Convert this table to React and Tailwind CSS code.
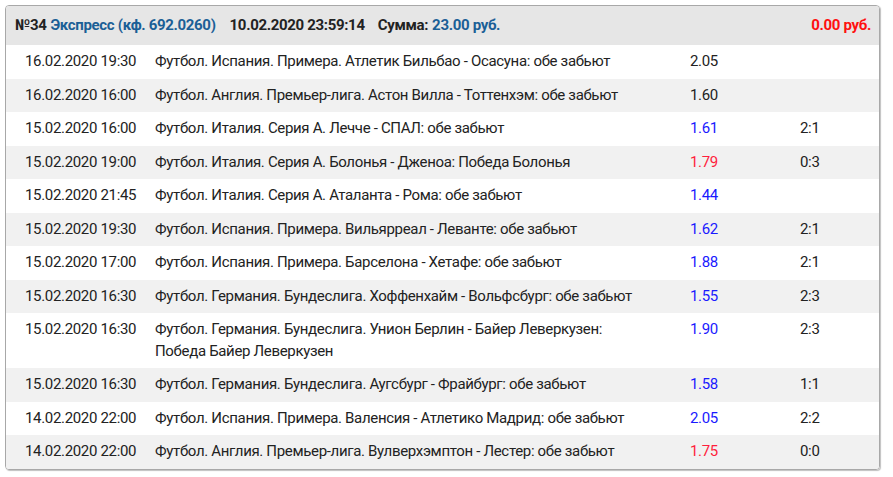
import React from "react";

const rows = [
  ["16.02.2020 19:30", "Футбол. Испания. Примера. Атлетик Бильбао - Осасуна: обе забьют", "2.05", "", "dark"],
  ["16.02.2020 16:00", "Футбол. Англия. Премьер-лига. Астон Вилла - Тоттенхэм: обе забьют", "1.60", "", "dark"],
  ["15.02.2020 16:00", "Футбол. Италия. Серия А. Лечче - СПАЛ: обе забьют", "1.61", "2:1", "blue"],
  ["15.02.2020 19:00", "Футбол. Италия. Серия А. Болонья - Дженоа: Победа Болонья", "1.79", "0:3", "red"],
  ["15.02.2020 21:45", "Футбол. Италия. Серия А. Аталанта - Рома: обе забьют", "1.44", "", "blue"],
  ["15.02.2020 19:30", "Футбол. Испания. Примера. Вильярреал - Леванте: обе забьют", "1.62", "2:1", "blue"],
  ["15.02.2020 17:00", "Футбол. Испания. Примера. Барселона - Хетафе: обе забьют", "1.88", "2:1", "blue"],
  ["15.02.2020 16:30", "Футбол. Германия. Бундеслига. Хоффенхайм - Вольфсбург: обе забьют", "1.55", "2:3", "blue"],
  ["15.02.2020 16:30", "Футбол. Германия. Бундеслига. Унион Берлин - Байер Леверкузен: Победа Байер Леверкузен", "1.90", "2:3", "blue"],
  ["15.02.2020 16:30", "Футбол. Германия. Бундеслига. Аугсбург - Фрайбург: обе забьют", "1.58", "1:1", "blue"],
  ["14.02.2020 22:00", "Футбол. Испания. Примера. Валенсия - Атлетико Мадрид: обе забьют", "2.05", "2:2", "blue"],
  ["14.02.2020 22:00", "Футбол. Англия. Премьер-лига. Вулверхэмптон - Лестер: обе забьют", "1.75", "0:0", "red"],
];

const oddColor = {
  dark: "text-[#222222]",
  blue: "text-[#1a1aff]",
  red: "text-[#ff1f3d]",
};

export default function App() {
  return (
    <div className="bg-white w-[893px] h-[477px] p-[5px] pr-[13px]" style={{ fontFamily: "Roboto, 'Liberation Sans', sans-serif" }}>
      <div className="border border-[#a8a8a8] rounded-[4px] overflow-hidden shadow-[1px_1px_1px_rgba(0,0,0,0.25)] text-[15px] tracking-[-0.33px] text-[#222222]">
        <div className="h-[39px] bg-[#e6e6e6] flex items-center pl-[9px] pr-[8px] font-bold">
          <span>№34</span>
          <span className="ml-[4px] text-[#1b5f96]">Экспресс (кф. 692.0260)</span>
          <span className="ml-[14px]">10.02.2020 23:59:14</span>
          <span className="ml-[13px]">Сумма:</span>
          <span className="ml-[4px] text-[#1b5f96]">23.00 руб.</span>
          <span className="ml-auto text-[#ff1010]">0.00 руб.</span>
        </div>
        {rows.map((r, i) => (
          <div key={i} className={`flex items-start py-[6px] leading-[21.5px] ${i % 2 === 0 ? "bg-white" : "bg-[#f1f1f1]"}`}>
            <div className="w-[149px] shrink-0 pl-[19px]">{r[0]}</div>
            <div className="w-[535px] shrink-0 pr-[42px]">{r[1]}</div>
            <div className={`w-[110px] shrink-0 ${oddColor[r[4]]}`}>{r[2]}</div>
            <div>{r[3]}</div>
          </div>
        ))}
      </div>
    </div>
  );
}
